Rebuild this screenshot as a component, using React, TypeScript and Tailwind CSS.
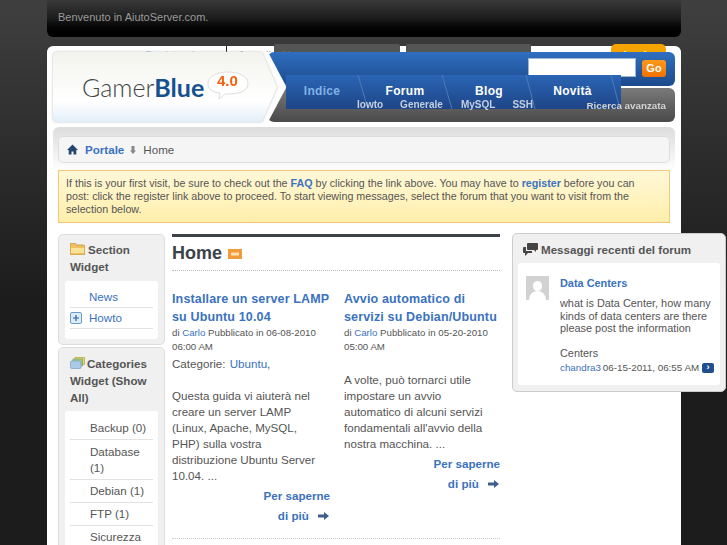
import React from 'react';

const SECTION_LINK = 'border-b border-[#e2e2e2] pl-[19px] py-[2px] leading-[16px]';
const CATEGORY_LINK = 'border-b border-[#e2e2e2] pl-[20px] py-[3px] leading-[16px]';

const Arrow = () => (
  <svg width="11" height="8" viewBox="0 0 11 8" className="inline-block ml-[6px] mr-[1px] align-[0px]">
    <path d="M0 2.500h6V0l5 4-5 4V5.500H0z" fill="#3d5f8c" />
  </svg>
);

const Post = ({ title, author, date, time, children }: { title: string; author: string; date: string; time: string; children: React.ReactNode }) => (
  <div>
    <h3 className="text-[12.500px] font-bold leading-[18px] tracking-[0.15px] text-[#3a72c0]">{title}</h3>
    <p className="text-[9.700px] leading-[14px] text-[#555]">
      di <span className="text-[#3a72c0]">{author}</span> Pubblicato in {date} {time}
    </p>
    {children}
    <div className="text-right text-[11.600px] font-bold leading-[20px] text-[#3a72c0] mt-[2px]">
      Per saperne
      <br />
      di più <Arrow />
    </div>
  </div>
);

export default function App() {
  return (
    <div className="relative w-[727px] h-[545px] overflow-hidden bg-gradient-to-b from-[#3f3f3f] to-[#1c1c1c] to-[300px] font-['Liberation_Sans',sans-serif] text-[11.600px] text-[#555]">
      <div className="ml-[47px] w-[634px]">
        {/* top bar */}
        <div className="h-[37px] rounded-b-[6px] bg-gradient-to-b from-[#3a3a3a] via-[#1c1c1c] to-black pl-[11px] pt-[10px] text-[11px] leading-[14px] text-[#9a9a9a]">
          Benvenuto in AiutoServer.com.
        </div>

        <div className="mt-[9px] bg-white rounded-t-[6px] px-[6px] h-[520px]">
          {/* links behind the header */}
          <div className="relative h-[6px]">
            <div className="absolute -top-[2px] left-0 right-0 h-[8px] flex overflow-hidden text-[11px] leading-[14px]">
              <span className="ml-[92px] w-[81px] pt-[4px] text-[#a8c8ec]">Registrazione</span>
              <span className="mt-[2px] w-[1px] bg-[#222]" />
              <span className="ml-[11px] w-[36px] pt-[4px] text-[#999]">Accedi</span>
              <span className="w-[126px] pl-[8px] pt-[4px] bg-[#555] text-[#777] rounded-t-[2px]">Nome utente</span>
              <span className="ml-[6px] w-[125px] bg-[#555] rounded-t-[2px]" />
              <span className="ml-[80px] w-[55px] pt-[4px] text-center font-bold text-white bg-[#f5a300] rounded-t-[5px]">Login</span>
            </div>
          </div>

          {/* header */}
          <div className="relative flex h-[70px]">
            <div className="w-[224px] h-[70px] shrink-0 drop-shadow-[0_0_1px_#bbbbbb]">
              <div className="relative h-full [clip-path:polygon(0_0,209px_0,224px_35px,209px_70px,0_70px)] bg-gradient-to-b from-[#f3f3ee] via-white via-70% to-[#e3eef8] rounded-l-[4px]">
                <div className="absolute left-[29px] top-[20px] font-['Lato',sans-serif] font-light text-[25px] leading-[30px] text-[#444]">
                  Gamer<span className="font-bold text-[#15518f]">Blue</span>
                </div>
                <svg width="44" height="29" viewBox="0 0 44 29" className="absolute left-[153px] top-[19px]">
                  <path d="M22 1C32 1 42 5 42 12.500S33 23 22 23c-1 0-2 0-3 0l-6 5 1-6C6 21 2 18 2 12.500 2 5 12 1 22 1z" fill="#fff" stroke="#ddd" />
                </svg>
                <div className="absolute left-[164px] top-[19px] text-[15px] font-bold leading-[20px] text-[#f4600c]">4.0</div>
              </div>
            </div>

            <div className="-ml-[9px] flex-1 flex flex-col gap-[2px] relative">
              <div className="h-[34px] rounded-[6px] bg-gradient-to-b from-[#2f6fc0] to-[#1c4a8c] [clip-path:polygon(0_0,100%_0,100%_100%,18px_100%)] flex justify-end items-start pt-[6px] pr-[9px]">
                <div className="w-[108px] h-[19px] bg-white border border-[#9db8d8]" />
                <div className="ml-[6px] mt-[2px] w-[24px] h-[17px] rounded-[3px] bg-gradient-to-b from-[#ff9a1a] to-[#f07000] text-center text-[11px] font-bold leading-[17px] text-white">
                  Go
                </div>
              </div>
              <div className="h-[34px] rounded-[6px] bg-gradient-to-b from-[#7a7a7a] to-[#4a4a4a] [clip-path:polygon(18px_0,100%_0,100%_100%,0_100%)]" />

              {/* nav tabs over the two bars */}
              <nav className="absolute left-[18px] top-[23px] w-[335px] h-[34px] bg-gradient-to-b from-[#2a65b5] to-[#1e4587] text-[12px] font-bold">
                <svg width="335" height="34" viewBox="0 0 335 34" className="absolute inset-0">
                  <path d="M72 0l10 34M156 0l10 34M240 0l9 34M325 0l9 34" stroke="#4f7bb5" fill="none" />
                </svg>
                <div className="relative flex pt-[9px] leading-[14px] tracking-[0.3px] text-center text-white">
                  <span className="w-[72px] text-[#7fb2e6]">Indice</span>
                  <span className="w-[94px]">Forum</span>
                  <span className="w-[74px]">Blog</span>
                  <span className="w-[93px]">Novità</span>
                </div>
                <div className="relative flex leading-[13px] text-[10px] text-[#c3cfde]">
                  <span className="ml-[71px]">Iowto</span>
                  <span className="ml-[17px]">Generale</span>
                  <span className="ml-[18px]">MySQL</span>
                  <span className="ml-[17px]">SSH</span>
                </div>
              </nav>
              <div className="absolute right-[9px] bottom-[9px] text-[9.800px] font-bold leading-[14px] text-[#d2d2d2]">
                Ricerca avanzata
              </div>
            </div>
          </div>

          {/* main panel */}
          <div className="mt-[5px] rounded-t-[6px] bg-gradient-to-b from-[#dcdcdc] to-white to-[44px] pt-[9px]">
            <div className="mx-[5px] h-[27px] flex items-center rounded-[5px] border border-[#ddd] bg-[#f5f5f5] pl-[8px] leading-[14px]">
              <svg width="11" height="11" viewBox="0 0 11 11">
                <path d="M5.500 0.500L11 6H9.300v4.500H6.500V7.500h-2v3H1.700V6H0z" fill="#24466f" />
              </svg>
              <span className="ml-[7px] font-bold text-[#3a72c0]">Portale</span>
              <svg width="8" height="8" viewBox="0 0 8 8" className="ml-[5px]">
                <path d="M4 0l3 3.500H5.500V8h-3V3.500H1z" transform="rotate(180 4 4)" fill="#888" />
              </svg>
              <span className="ml-[6px]">Home</span>
            </div>

            <div className="mx-[5px] mt-[7px] h-[53px] border border-[#f0c878] bg-gradient-to-b from-[#fff8d8] to-[#ffeeaa] pl-[7px] pr-[25px] pt-[6px] text-[10.700px] leading-[13px]">
              If this is your first visit, be sure to check out the <b className="text-[#3a72c0]">FAQ</b> by clicking the link above. You may have to <b className="text-[#3a72c0]">register</b> before you can post: click the register link above to proceed. To start viewing messages, select the forum that you want to visit from the selection below.
            </div>

            <div className="flex mt-[11px] ml-[5px] items-start">
              {/* left column */}
              <div className="w-[107px] shrink-0 flex flex-col gap-[2px]">
                <div className="rounded-[5px] border border-[#ddd] bg-[#f0f0f0] px-[6px] pb-[5px] pt-[6px]">
                  <div className="px-[5px] font-bold leading-[17px] text-[#555]">
                    <svg width="15" height="12" viewBox="0 0 15 12" className="inline-block mr-[3px] align-[-1px]">
                      <path d="M0 2q0-2 2-2h3l1.500 2H13q2 0 2 2v6q0 2-2 2H2q-2 0-2-2z" fill="#f0c060" stroke="#b98a30" strokeWidth="0.700" />
                      <path d="M1 5h13v5H1z" fill="#fbe29a" />
                    </svg>
                    Section Widget
                  </div>
                  <ul className="mt-[6px] rounded-[3px] bg-white px-[5px] pb-[10px] pt-[6px] text-[#3a72c0]">
                    <li className={SECTION_LINK}>News</li>
                    <li className={`${SECTION_LINK} relative`}>
                      <svg width="12" height="12" viewBox="0 0 12 12" className="absolute left-0 top-[4px]">
                        <rect x="0.500" y="0.500" width="11" height="11" rx="1.500" fill="#dcebf8" stroke="#6f9ac8" />
                        <path d="M6 3v6M3 6h6" stroke="#2d5f9a" strokeWidth="1.200" />
                      </svg>
                      Howto
                    </li>
                  </ul>
                </div>

                <div className="rounded-[5px] border border-[#ddd] bg-[#f0f0f0] px-[6px] pt-[7px] h-[300px]">
                  <div className="px-[5px] font-bold leading-[17px] text-[#555]">
                    <svg width="15" height="12" viewBox="0 0 15 12" className="inline-block mr-[2px] align-[-1px]">
                      <rect x="5" y="0.500" width="9.500" height="7" fill="#e8d46a" stroke="#a99a3a" strokeWidth="0.600" />
                      <rect x="3" y="2" width="9.500" height="7" fill="#9ed08a" stroke="#6e9a5e" strokeWidth="0.600" />
                      <rect x="0.500" y="4" width="10.500" height="7.500" rx="1" fill="#a9cbe8" stroke="#6a94b8" strokeWidth="0.600" />
                    </svg>
                    Categories Widget (Show All)
                  </div>
                  <ul className="mt-[5px] rounded-[3px] bg-white px-[5px] pt-[6px]">
                    <li className={CATEGORY_LINK}>Backup (0)</li>
                    <li className={`${CATEGORY_LINK} pt-[4px]`}>Database (1)</li>
                    <li className={CATEGORY_LINK}>Debian (1)</li>
                    <li className={CATEGORY_LINK}>FTP (1)</li>
                    <li className={CATEGORY_LINK}>Sicurezza</li>
                  </ul>
                </div>
              </div>

              {/* middle column */}
              <div className="w-[328px] ml-[7px] shrink-0">
                <div className="h-[3px] bg-[#3c424a]" />
                <div className="flex items-center h-[34px] pb-[2px] border-b border-dotted border-[#bbb]">
                  <h1 className="text-[18px] font-bold leading-[24px] text-[#3c424a]">Home</h1>
                  <svg width="14" height="10" viewBox="0 0 14 10" className="ml-[6px] mt-[3px]">
                    <rect width="14" height="10" fill="#f29b3a" />
                    <rect x="3" y="3.500" width="8" height="3" fill="#fde0b8" />
                  </svg>
                </div>
                <div className="grid grid-cols-[158px_156px] gap-x-[14px] mt-[19px]">
                  <Post title="Installare un server LAMP su Ubuntu 10.04" author="Carlo" date="06-08-2010" time="06:00 AM">
                    <p className="leading-[16px] mt-[2px]">
                      Categorie: <span className="text-[#3a72c0] ml-[1px]">Ubuntu</span>,
                    </p>
                    <p className="leading-[16px] mt-[16px] pr-[10px]">
                      Questa guida vi aiuterà nel creare un server LAMP (Linux, Apache, MySQL, PHP) sulla vostra distribuzione Ubuntu Server 10.04. ...
                    </p>
                  </Post>
                  <Post title="Avvio automatico di servizi su Debian/Ubuntu" author="Carlo" date="05-20-2010" time="05:00 AM">
                    <p className="leading-[16px] mt-[18px] pr-[10px]">
                      A volte, può tornarci utile impostare un avvio automatico di alcuni servizi fondamentali all'avvio della nostra macchina. ...
                    </p>
                  </Post>
                </div>
                <div className="mt-[12px] border-b border-dotted border-[#ccc]" />
              </div>

              {/* right column, sticks out of the page shell */}
              <div className="w-[214px] ml-[12px] shrink-0 rounded-[5px] border border-[#ccc] bg-[#f0f0f0] px-[5px] pb-[6px] -mt-[1px]">
                <div className="flex items-center h-[29px] pl-[5px] pt-[2px] font-bold text-[#555]">
                  <svg width="15" height="13" viewBox="0 0 15 13" className="mr-[3px]">
                    <path d="M5 0h9q1 0 1 1v5q0 1-1 1h-1v2l-2-2H5q-1 0-1-1V1q0-1 1-1z" fill="#444" />
                    <path d="M1 4h2v4h6v2H5l-3 3v-3H1q-1 0-1-1V5q0-1 1-1z" fill="#444" />
                  </svg>
                  Messaggi recenti del forum
                </div>
                <div className="rounded-[3px] bg-white h-[122px] pl-[8px] pr-[6px] pt-[13px] flex">
                  <div className="relative w-[23px] h-[24px] shrink-0 overflow-hidden bg-[#d2d2d2]">
                    <div className="absolute left-[7px] top-[5px] w-[9px] h-[10px] rounded-full bg-white" />
                    <div className="absolute left-[3px] top-[15px] w-[17px] h-[14px] rounded-t-full bg-white" />
                  </div>
                  <div className="ml-[11px] flex-1 text-[10.900px]">
                    <div className="font-bold leading-[14px] text-[#3a72c0]">Data Centers</div>
                    <p className="mt-[7px] leading-[12.500px]">what is Data Center, how many kinds of data centers are there please post the information</p>
                    <p className="mt-[12.500px] leading-[12.500px]">Centers</p>
                    <div className="mt-[1px] flex items-center whitespace-nowrap text-[9.800px] leading-[14px]">
                      <span className="text-[#3a72c0]">chandra3</span>
                      <span className="ml-[2px]">06-15-2011, 06:55 AM</span>
                      <span className="ml-[3px] w-[12px] h-[10px] rounded-[2px] bg-[#1f4f8f] text-center text-[9px] leading-[9px] font-bold text-white">›</span>
                    </div>
                  </div>
                </div>
              </div>
            </div>
          </div>
        </div>
      </div>
    </div>
  );
}
